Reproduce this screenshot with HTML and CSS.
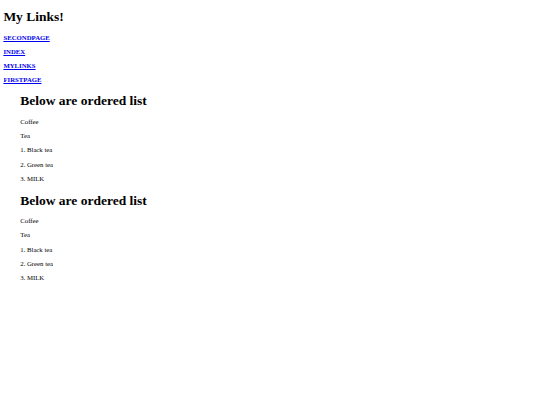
FILE: index.html
```html
<!DOCTYPE html>
<html lang="en">
<head>
<meta charset="utf-8">
<title>My Links!</title>
<link rel="stylesheet" href="styles.css">
</head>
<body>
<h1 class="title">My Links!</h1>
<div class="links">
<p class="link-row"><a href="#"><b>SECONDPAGE</b></a></p>
<p class="link-row"><a href="#"><b>INDEX</b></a></p>
<p class="link-row"><a href="#"><b>MYLINKS</b></a></p>
<p class="link-row"><a href="#"><b>FIRSTPAGE</b></a></p>
</div>
<div class="block">
<h1 class="heading">Below are ordered list</h1>
<p class="item">Coffee</p>
<p class="item">Tea</p>
<p class="item">1. Black tea</p>
<p class="item">2. Green tea</p>
<p class="item">3. MILK</p>
</div>
<div class="block">
<h1 class="heading">Below are ordered list</h1>
<p class="item">Coffee</p>
<p class="item">Tea</p>
<p class="item">1. Black tea</p>
<p class="item">2. Green tea</p>
<p class="item">3. MILK</p>
</div>
</body>
</html>
```
FILE: styles.css
```css
html {
  background: #ffffff;
}
body {
  margin: 3.375px;
  font-family: "Liberation Serif", "Times New Roman", serif;
  font-size: 6.75px;
  color: #000000;
}
.title,
.heading {
  font-size: 13.5px;
  font-weight: bold;
  line-height: 15.5px;
  margin: 9px 0;
}
.title {
  margin-top: 6px;
}
.heading {
  margin-top: 10px;
}
.link-row {
  line-height: 7.5px;
  margin: 6.5px 0;
}
.item {
  line-height: 7.75px;
  margin: 6.5px 0;
}
.link-row a {
  color: #0000ee;
  text-decoration: underline;
}
.block {
  padding-left: 16.875px;
}
```
